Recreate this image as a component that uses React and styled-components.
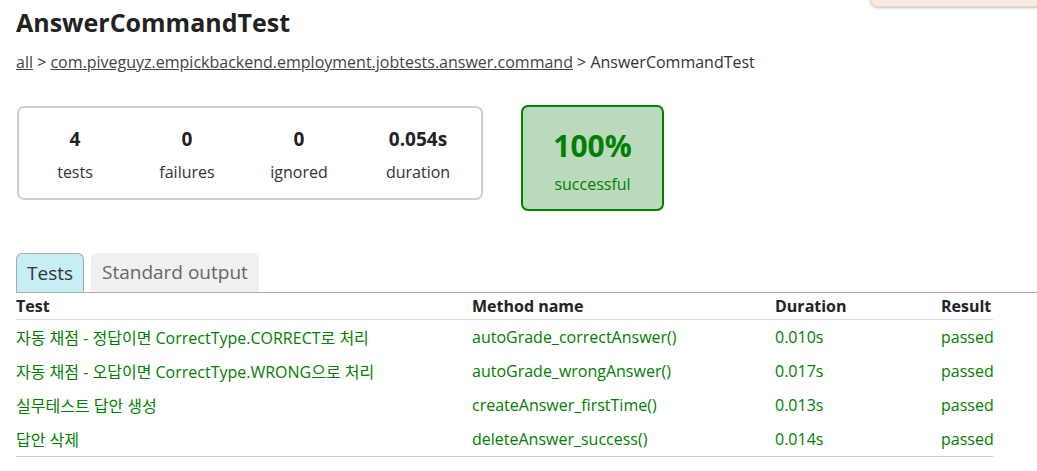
import React from "react";
import styled, { createGlobalStyle } from "styled-components";

const Global = createGlobalStyle`
  html, body { margin: 0; padding: 0; background: #fff; }
  body {
    font-family: "Open Sans", "Noto Sans CJK KR", sans-serif;
    font-size: 16px;
    color: #333;
    overflow: hidden;
  }
`;

const Page = styled.div`
  position: relative;
  width: 1037px;
  height: 471px;
  overflow: hidden;
  padding: 0 0 0 16px;
  box-sizing: border-box;
`;

const Popup = styled.div`
  position: absolute;
  top: -40px;
  right: -20px;
  width: 185px;
  height: 45px;
  background: #fbeadb;
  border: 1px solid #ddd;
  border-radius: 8px;
  box-shadow: 0 1px 3px rgba(0, 0, 0, 0.25);
`;

const Title = styled.h1`
  margin: 0;
  padding-top: 6px;
  font-size: 25px;
  line-height: 32px;
  font-weight: 700;
  color: #222;
`;

const Breadcrumb = styled.div`
  margin-top: 13px;
  line-height: 22px;
  color: #333;
`;

const Crumb = styled.a`
  color: #444;
  text-decoration: underline;
`;

const SummaryRow = styled.div`
  display: flex;
  align-items: flex-start;
  gap: 38px;
  margin-top: 33px;
  padding-left: 1px;
`;

const SummaryBox = styled.div`
  display: grid;
  grid-template-columns: 112px 112px 112px 126px;
  height: 94px;
  box-sizing: border-box;
  border: 2px solid #d0d0d0;
  border-radius: 7px;
`;

const Counter = styled.div`
  display: flex;
  flex-direction: column;
  align-items: center;
  padding-top: 19px;
`;

const Num = styled.div`
  font-weight: 700;
  font-size: 19px;
  line-height: 24px;
  color: #222;
`;

const Label = styled.div`
  margin-top: 10px;
  line-height: 22px;
  color: #333;
`;

const SuccessBox = styled.div`
  margin-top: -1px;
  width: 143px;
  height: 106px;
  box-sizing: border-box;
  background: #bbd9bb;
  border: 2px solid #008000;
  border-radius: 7px;
  display: flex;
  flex-direction: column;
  align-items: center;
  color: #008000;
`;

const Percent = styled.div`
  margin-top: 21px;
  font-size: 30px;
  line-height: 36px;
  font-weight: 700;
`;

const SuccessLabel = styled.div`
  margin-top: 9px;
  line-height: 22px;
`;

const TabBar = styled.div`
  display: flex;
  gap: 7px;
  margin-top: 42px;
  border-bottom: 1px solid #aaa;
  height: 39px;
  align-items: flex-end;
`;

const Tab = styled.div`
  height: 39px;
  box-sizing: border-box;
  padding: 0 10px;
  font-size: 19px;
  line-height: 39px;
  border-radius: 6px 6px 0 0;
  ${(p) =>
    p.$active
      ? `background:#c5eef5;border:1px solid #aaa;border-bottom:none;color:#333;`
      : `background:#f0f0f0;color:#666;padding:0 11px;`}
`;

const Table = styled.div`
  width: 977px;
`;

const Row = styled.div`
  display: grid;
  grid-template-columns: 456px 303px 166px 52px;
  align-items: center;
  box-sizing: border-box;
  height: ${(p) => (p.$head ? 27 : 34)}px;
  ${(p) => p.$head && "border-bottom: 1px solid #ddd;"}
  ${(p) => p.$last && "border-bottom: 1px solid #ccc; height: 35px;"}
`;

const HeadCell = styled.div`
  font-weight: 700;
  color: #222;
  white-space: nowrap;
`;

const Cell = styled.div`
  color: #008000;
  white-space: nowrap;
`;

const tests = [
  ["자동 채점 - 정답이면 CorrectType.CORRECT로 처리", "autoGrade_correctAnswer()", "0.010s"],
  ["자동 채점 - 오답이면 CorrectType.WRONG으로 처리", "autoGrade_wrongAnswer()", "0.017s"],
  ["실무테스트 답안 생성", "createAnswer_firstTime()", "0.013s"],
  ["답안 삭제", "deleteAnswer_success()", "0.014s"],
];

const counters = [
  ["4", "tests"],
  ["0", "failures"],
  ["0", "ignored"],
  ["0.054s", "duration"],
];

export default function App() {
  return (
    <>
      <Global />
      <Page>
        <Popup />
        <Title>AnswerCommandTest</Title>
        <Breadcrumb>
          <Crumb>all</Crumb> &gt;{" "}
          <Crumb>com.piveguyz.empickbackend.employment.jobtests.answer.command</Crumb>{" "}
          &gt; AnswerCommandTest
        </Breadcrumb>
        <SummaryRow>
          <SummaryBox>
            {counters.map(([n, l]) => (
              <Counter key={l}>
                <Num>{n}</Num>
                <Label>{l}</Label>
              </Counter>
            ))}
          </SummaryBox>
          <SuccessBox>
            <Percent>100%</Percent>
            <SuccessLabel>successful</SuccessLabel>
          </SuccessBox>
        </SummaryRow>
        <TabBar>
          <Tab $active>Tests</Tab>
          <Tab>Standard output</Tab>
        </TabBar>
        <Table>
          <Row $head>
            <HeadCell>Test</HeadCell>
            <HeadCell>Method name</HeadCell>
            <HeadCell>Duration</HeadCell>
            <HeadCell>Result</HeadCell>
          </Row>
          {tests.map(([t, m, d], i) => (
            <Row key={m} $last={i === tests.length - 1}>
              <Cell>{t}</Cell>
              <Cell>{m}</Cell>
              <Cell>{d}</Cell>
              <Cell>passed</Cell>
            </Row>
          ))}
        </Table>
      </Page>
    </>
  );
}
